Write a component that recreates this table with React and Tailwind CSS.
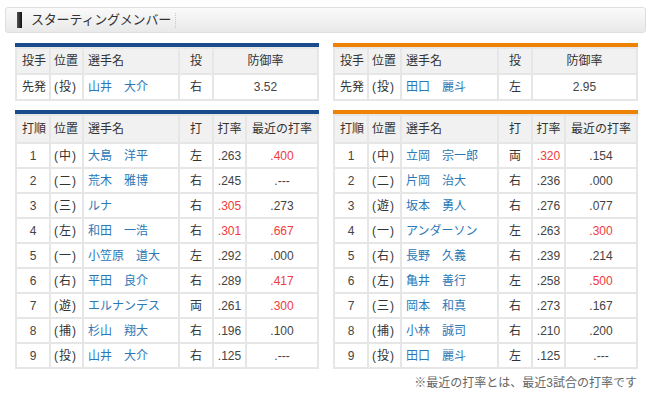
import React from 'react';

const pitchers = {
    left: { role: '先発', pos: '(投)', name: '山井　大介', hand: '右', era: '3.52' },
    right: { role: '先発', pos: '(投)', name: '田口　麗斗', hand: '左', era: '2.95' },
};

const lineups = {
    left: [
        ['1', '(中)', '大島　洋平', '左', '.263', false, '.400', true],
        ['2', '(二)', '荒木　雅博', '右', '.245', false, '.---', false],
        ['3', '(三)', 'ルナ', '右', '.305', true, '.273', false],
        ['4', '(左)', '和田　一浩', '右', '.301', true, '.667', true],
        ['5', '(一)', '小笠原　道大', '左', '.292', false, '.000', false],
        ['6', '(右)', '平田　良介', '右', '.289', false, '.417', true],
        ['7', '(遊)', 'エルナンデス', '両', '.261', false, '.300', true],
        ['8', '(捕)', '杉山　翔大', '右', '.196', false, '.100', false],
        ['9', '(投)', '山井　大介', '右', '.125', false, '.---', false],
    ],
    right: [
        ['1', '(中)', '立岡　宗一郎', '両', '.320', true, '.154', false],
        ['2', '(二)', '片岡　治大', '右', '.236', false, '.000', false],
        ['3', '(遊)', '坂本　勇人', '右', '.276', false, '.077', false],
        ['4', '(一)', 'アンダーソン', '左', '.263', false, '.300', true],
        ['5', '(右)', '長野　久義', '右', '.239', false, '.214', false],
        ['6', '(左)', '亀井　善行', '左', '.258', false, '.500', true],
        ['7', '(三)', '岡本　和真', '右', '.273', false, '.167', false],
        ['8', '(捕)', '小林　誠司', '右', '.210', false, '.200', false],
        ['9', '(投)', '田口　麗斗', '左', '.125', false, '.---', false],
    ],
};

const th = 'border-2 border-[#e6e6e6] bg-[#f1f1f1] font-normal text-[#333] text-[12px] p-0';
const td = 'border-2 border-[#e6e6e6] bg-white text-[12px] p-0';
const num = 'text-[11px] text-center';
const pos = 'text-[#333] pl-[3px] tracking-[1px] whitespace-nowrap';

const PitcherTable = ({ p, bar, nameW }) => (
    <div>
        <div className={`h-[4px] ${bar}`} />
        <table className="w-full table-fixed border-collapse">
            <colgroup>
                <col className="w-[34px]" />
                <col className="w-[33px]" />
                <col style={{ width: nameW }} />
                <col className="w-[34px]" />
                <col />
            </colgroup>
            <thead>
                <tr className="h-[26px]">
                    <th className={`${th} text-left pl-[5px]`}>投手</th>
                    <th className={`${th} text-left pl-[3px]`}>位置</th>
                    <th className={`${th} text-left pl-[4px]`}>選手名</th>
                    <th className={`${th} text-center`}>投</th>
                    <th className={`${th} text-center`}>防御率</th>
                </tr>
            </thead>
            <tbody>
                <tr className="h-[26px]">
                    <td className={`${td} text-[#333] pl-[5px]`}>{p.role}</td>
                    <td className={`${td} ${pos}`}>{p.pos}</td>
                    <td className={`${td} text-[#2b78b7] pl-[4px]`}>{p.name}</td>
                    <td className={`${td} text-[#333] text-center`}>{p.hand}</td>
                    <td className={`${td} ${num} text-[#444]`}>{p.era}</td>
                </tr>
            </tbody>
        </table>
    </div>
);

const LineupTable = ({ rows, bar, nameW }) => (
    <div>
        <div className={`h-[4px] ${bar}`} />
        <table className="w-full table-fixed border-collapse">
            <colgroup>
                <col className="w-[34px]" />
                <col className="w-[33px]" />
                <col style={{ width: nameW }} />
                <col className="w-[34px]" />
                <col className="w-[33px]" />
                <col />
            </colgroup>
            <thead>
                <tr className="h-[28px]">
                    <th className={`${th} text-left pl-[5px]`}>打順</th>
                    <th className={`${th} text-left pl-[3px]`}>位置</th>
                    <th className={`${th} text-left pl-[4px]`}>選手名</th>
                    <th className={`${th} text-center`}>打</th>
                    <th className={`${th} text-center`}>打率</th>
                    <th className={`${th} text-center`}>最近の打率</th>
                </tr>
            </thead>
            <tbody>
                {rows.map((r) => (
                    <tr key={r[0]} className="h-[25px]">
                        <td className={`${td} ${num} text-[#444]`}>{r[0]}</td>
                        <td className={`${td} ${pos}`}>{r[1]}</td>
                        <td className={`${td} text-[#2b78b7] pl-[4px]`}>{r[2]}</td>
                        <td className={`${td} text-[#333] text-center`}>{r[3]}</td>
                        <td className={`${td} ${num} ${r[5] ? 'text-[#f03c3c]' : 'text-[#444]'}`}>{r[4]}</td>
                        <td className={`${td} ${num} ${r[7] ? 'text-[#f03c3c]' : 'text-[#444]'}`}>{r[6]}</td>
                    </tr>
                ))}
            </tbody>
        </table>
    </div>
);

export default function App() {
    return (
        <div
            className="w-[650px] h-[393px] bg-white pt-[7px] px-[5px] overflow-hidden"
            style={{ fontFamily: '"Liberation Sans", "Noto Sans CJK JP", sans-serif' }}
        >
            {/* heading bar */}
            <div className="w-[641px] h-[26px] flex items-center rounded-[3px] border border-[#dedede] bg-gradient-to-b from-[#fafafa] to-[#e9e9e9]">
                <div className="ml-[11px] w-[5px] h-[16px] bg-gradient-to-r from-[#555] to-[#111]" />
                <span className="ml-[9px] text-[13px] text-[#333] tracking-[-0.2px]">スターティングメンバー</span>
                <div className="ml-[4px] h-[15px] border-l border-dotted border-[#c8c8c8]" />
            </div>

            <div className="mt-[10px] pl-[10px] grid grid-cols-[304px_305px] gap-x-[14px] gap-y-[9px]">
                <PitcherTable p={pitchers.left} bar="bg-[#1a4c8c]" nameW="96px" />
                <PitcherTable p={pitchers.right} bar="bg-[#ee8205]" nameW="97px" />
                <LineupTable rows={lineups.left} bar="bg-[#1a4c8c]" nameW="96px" />
                <LineupTable rows={lineups.right} bar="bg-[#ee8205]" nameW="97px" />
            </div>

            <div className="w-[632px] mt-[5px] text-right text-[12px] text-[#666]">
                ※最近の打率とは、最近3試合の打率です
            </div>
        </div>
    );
}
